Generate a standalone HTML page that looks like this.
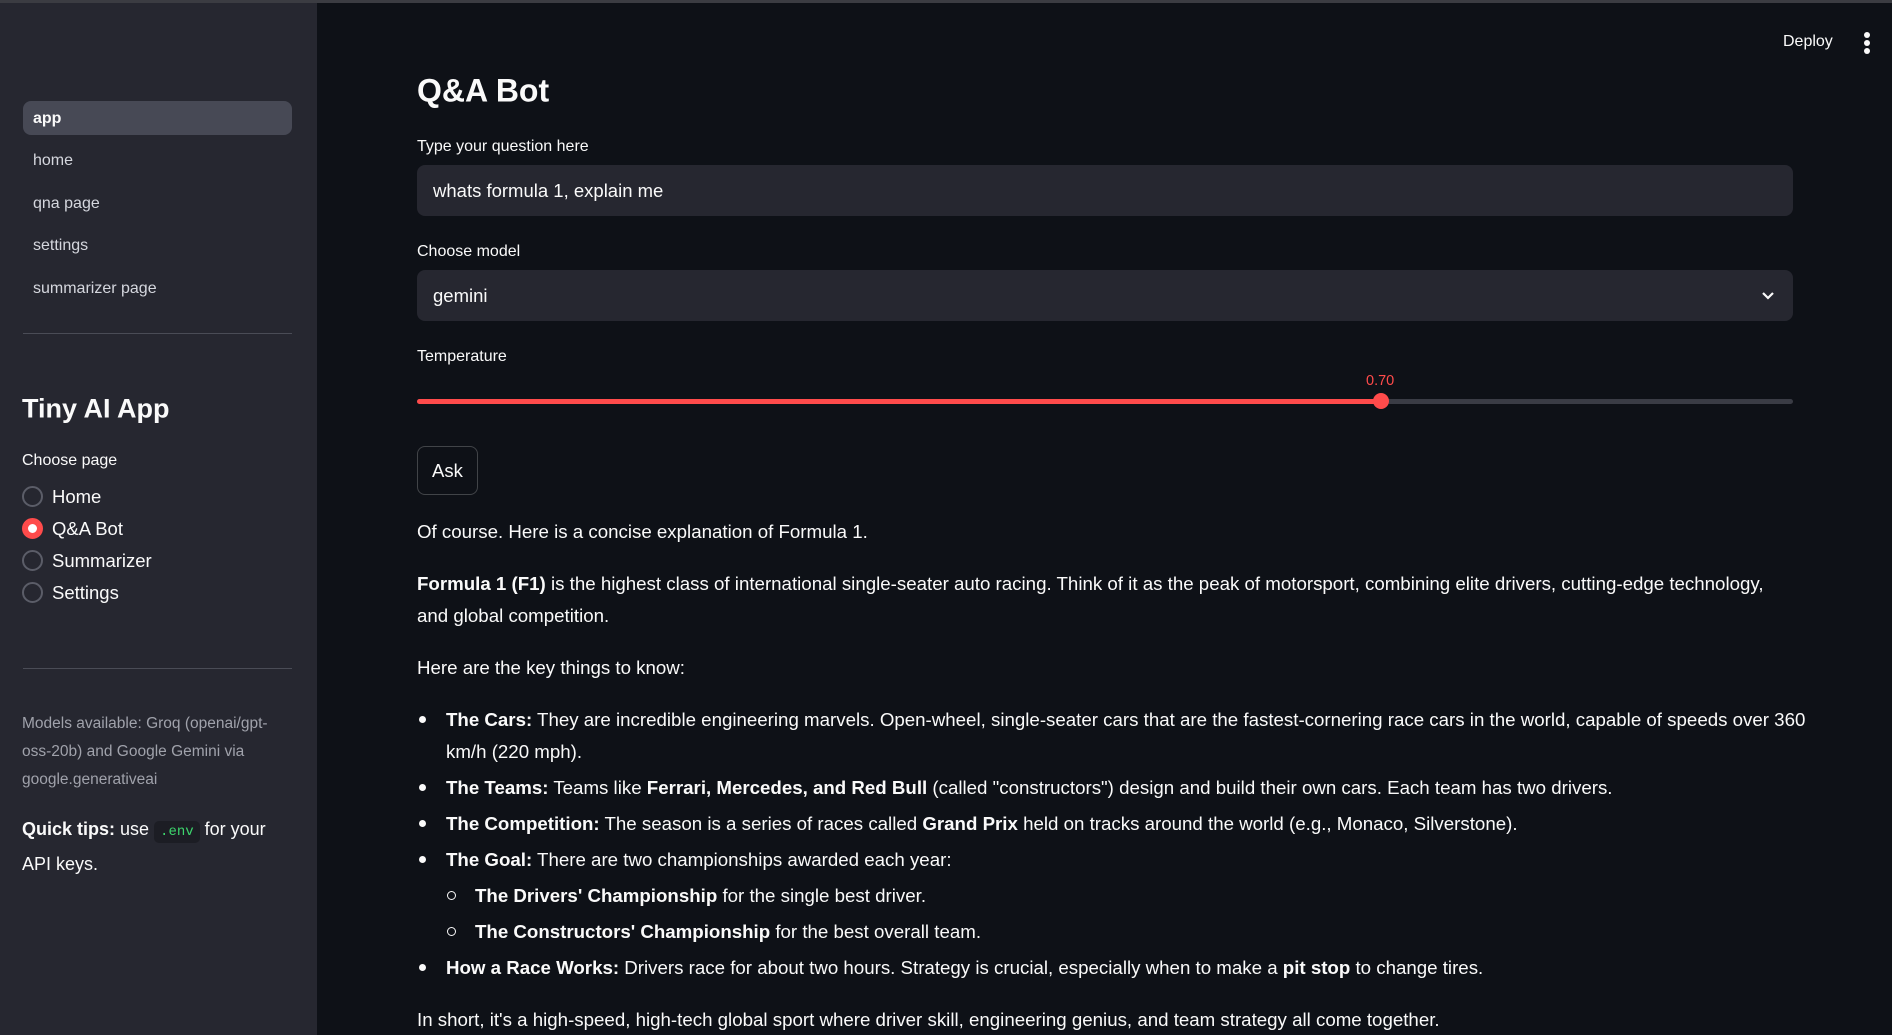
<!DOCTYPE html>
<html><head><meta charset="utf-8"><style>
*{margin:0;padding:0;box-sizing:border-box}
body{width:1892px;height:1035px;overflow:hidden;background:#0e1117;font-family:"Liberation Sans",sans-serif;color:#fafafa;position:relative}
.a{position:absolute;white-space:nowrap}
.sb{position:absolute;left:0;top:0;width:317px;height:1035px;background:#262730}
.topbar{position:absolute;left:0;top:0;width:1892px;height:3px;background:#3b3c42}
.nav{font-size:16px;color:#d5d7de;left:33px;transform:translateY(-50%)}
.rad{left:22px;width:21px;height:21px;border-radius:50%;border:2px solid #5b5d68}
.rl{left:52px;font-size:18.5px;transform:translateY(-50%)}
.lbl{font-size:16px;left:417px;transform:translateY(-50%)}
.box{left:417px;width:1376px;background:#262730;border-radius:8px}
.t{font-size:18.7px;transform:translateY(-50%);left:417px}
.b{font-weight:bold}
.dot{position:absolute;width:7px;height:7px;border-radius:50%;background:#fafafa}
.sub{position:absolute;width:9px;height:9px;border-radius:50%;border:1.5px solid #fafafa}
</style></head><body>
<div class="sb"></div>
<div class="topbar"></div>
<div class="a" style="left:23px;top:101px;width:269px;height:34px;background:#474955;border-radius:8px"></div>
<div class="a nav b" style="top:119px;color:#fafafa">app</div>
<div class="a nav" style="top:161px">home</div>
<div class="a nav" style="top:204px">qna page</div>
<div class="a nav" style="top:246px">settings</div>
<div class="a nav" style="top:289px">summarizer page</div>
<div class="a" style="left:23px;top:333px;width:269px;height:1px;background:#4a4c56"></div>
<div class="a b" style="left:22px;top:409px;font-size:27px;transform:translateY(-50%)">Tiny AI App</div>
<div class="a" style="left:22px;top:461px;font-size:16px;transform:translateY(-50%)">Choose page</div>
<div class="a rad" style="top:486px"></div>
<div class="a rl" style="top:497px">Home</div>
<div class="a rad" style="top:518px;border:6px solid #ff4b4b;background:#fff"></div>
<div class="a rl" style="top:529px">Q&amp;A Bot</div>
<div class="a rad" style="top:550px"></div>
<div class="a rl" style="top:561px">Summarizer</div>
<div class="a rad" style="top:582px"></div>
<div class="a rl" style="top:593px">Settings</div>
<div class="a" style="left:23px;top:668px;width:269px;height:1px;background:#4a4c56"></div>
<div class="a" style="left:22px;top:710px;font-size:15.5px;color:#a0a2ab;line-height:28px">Models available: Groq (openai/gpt-<br>oss-20b) and Google Gemini via<br>google.generativeai</div>
<div class="a" style="left:22px;top:813px;font-size:18px;line-height:32px"><b>Quick tips:</b> use <span style="font-family:'Liberation Mono',monospace;font-size:14px;color:#3dd56d;background:#1c1d24;padding:3px 6px;border-radius:5px">.env</span> for your<br>API keys.</div>

<div class="a" style="left:1783px;top:42px;font-size:16px;transform:translateY(-50%)">Deploy</div>
<div class="dot" style="left:1864px;top:32px;width:6px;height:6px"></div>
<div class="dot" style="left:1864px;top:40px;width:6px;height:6px"></div>
<div class="dot" style="left:1864px;top:48px;width:6px;height:6px"></div>

<div class="a b" style="left:417px;top:91px;font-size:32px;transform:translateY(-50%)">Q&amp;A Bot</div>
<div class="a lbl" style="top:147px">Type your question here</div>
<div class="a box" style="top:165px;height:51px"></div>
<div class="a" style="left:433px;top:191px;font-size:18.5px;transform:translateY(-50%)">whats formula 1, explain me</div>
<div class="a lbl" style="top:252px">Choose model</div>
<div class="a box" style="top:270px;height:51px"></div>
<div class="a" style="left:433px;top:296px;font-size:18.5px;transform:translateY(-50%)">gemini</div>
<svg class="a" style="left:1760px;top:289px" width="16" height="14" viewBox="0 0 16 14"><path d="M3 4l5 5 5-5" stroke="#fafafa" stroke-width="2.2" fill="none"/></svg>
<div class="a lbl" style="top:357px">Temperature</div>
<div class="a" style="left:1366px;top:381px;font-size:14.5px;color:#ff4b4b;transform:translateY(-50%)">0.70</div>
<div class="a" style="left:417px;top:399px;width:1376px;height:5px;border-radius:3px;background:#3a3c45"></div>
<div class="a" style="left:417px;top:399px;width:964px;height:5px;border-radius:3px;background:#ff4b4b"></div>
<div class="a" style="left:1373px;top:393px;width:16px;height:16px;border-radius:50%;background:#ff4b4b"></div>
<div class="a" style="left:417px;top:446px;width:61px;height:49px;border:1px solid rgba(250,250,250,.22);border-radius:8px"></div>
<div class="a" style="left:432px;top:471px;font-size:18.5px;transform:translateY(-50%)">Ask</div>

<div class="a t" style="top:532px">Of course. Here is a concise explanation of Formula 1.</div>
<div class="a t" style="top:584px"><b>Formula 1 (F1)</b> is the highest class of international single-seater auto racing. Think of it as the peak of motorsport, combining elite drivers, cutting-edge technology,</div>
<div class="a t" style="top:616px">and global competition.</div>
<div class="a t" style="top:668px">Here are the key things to know:</div>
<div class="dot" style="left:419px;top:716px"></div>
<div class="a t" style="left:446px;top:720px"><b>The Cars:</b> They are incredible engineering marvels. Open-wheel, single-seater cars that are the fastest-cornering race cars in the world, capable of speeds over 360</div>
<div class="a t" style="left:446px;top:752px">km/h (220 mph).</div>
<div class="dot" style="left:419px;top:784px"></div>
<div class="a t" style="left:446px;top:788px"><b>The Teams:</b> Teams like <b>Ferrari, Mercedes, and Red Bull</b> (called "constructors") design and build their own cars. Each team has two drivers.</div>
<div class="dot" style="left:419px;top:820px"></div>
<div class="a t" style="left:446px;top:824px"><b>The Competition:</b> The season is a series of races called <b>Grand Prix</b> held on tracks around the world (e.g., Monaco, Silverstone).</div>
<div class="dot" style="left:419px;top:856px"></div>
<div class="a t" style="left:446px;top:860px"><b>The Goal:</b> There are two championships awarded each year:</div>
<div class="sub" style="left:447px;top:891px"></div>
<div class="a t" style="left:475px;top:896px"><b>The Drivers' Championship</b> for the single best driver.</div>
<div class="sub" style="left:447px;top:927px"></div>
<div class="a t" style="left:475px;top:932px"><b>The Constructors' Championship</b> for the best overall team.</div>
<div class="dot" style="left:419px;top:964px"></div>
<div class="a t" style="left:446px;top:968px"><b>How a Race Works:</b> Drivers race for about two hours. Strategy is crucial, especially when to make a <b>pit stop</b> to change tires.</div>
<div class="a t" style="top:1020px">In short, it's a high-speed, high-tech global sport where driver skill, engineering genius, and team strategy all come together.</div>
</body></html>
